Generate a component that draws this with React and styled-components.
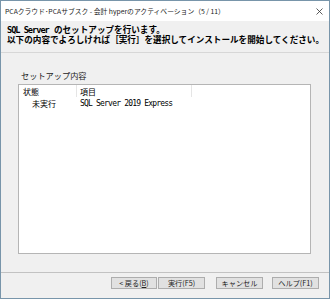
import React from 'react';
import styled, { createGlobalStyle } from 'styled-components';

const GlobalStyle = createGlobalStyle`
  html, body {
    margin: 0;
    padding: 0;
    background: #ffffff;
  }
  * {
    box-sizing: border-box;
  }
`;

const Window = styled.div`
  width: 330px;
  height: 299px;
  border: 1px solid #7895aa;
  background: #f0f0f0;
  display: flex;
  flex-direction: column;
  font-family: "Noto Sans CJK JP", "Noto Sans", sans-serif;
  color: #000;
  overflow: hidden;
`;

const TitleBar = styled.div`
  height: 20px;
  background: #fff;
  display: flex;
  align-items: center;
  justify-content: space-between;
  padding: 0 6px 0 4px;
  font-size: 6.8px;
  color: #1a1a1a;
  white-space: nowrap;
`;

const CloseIcon = styled.svg`
  width: 7px;
  height: 7px;
`;

const Header = styled.div`
  height: 32px;
  padding: 4px 0 0 6px;
  border-bottom: 1px solid #d7d7d7;
  font-family: "Liberation Mono", "Noto Sans CJK JP", monospace;
  font-weight: bold;
  font-size: 8.6px;
  line-height: 10px;
  white-space: nowrap;
`;

const Latin = styled.span`
  font-family: "DejaVu Sans Mono", monospace;
  letter-spacing: ${p => p.ls}px;
`;

const Body = styled.div`
  flex: 1;
  display: flex;
  flex-direction: column;
  padding: 17px 18px 18px 17px;
`;

const Label = styled.div`
  font-size: 8.2px;
  line-height: 10px;
  height: 10px;
  color: #222;
  padding-left: 3px;
  margin-bottom: 4px;
`;

const ListBox = styled.div`
  flex: 1;
  background: #fff;
  border: 1px solid #b5b5b5;
  display: flex;
  flex-direction: column;
`;

const Row = styled.div`
  display: flex;
  height: ${p => (p.head ? '12px' : '13px')};
  align-items: center;
  font-size: 8px;
`;

const Cell = styled.div`
  width: ${p => p.w}px;
  height: 100%;
  display: flex;
  align-items: center;
  padding-left: ${p => p.pad}px;
  border-right: ${p => (p.divider ? '1px solid #e5e5e5' : 'none')};
  font-size: 8px;
  white-space: nowrap;
`;

const Footer = styled.div`
  height: 26px;
  border-top: 1px solid #c2c2c2;
  display: flex;
  justify-content: flex-end;
  align-items: flex-start;
  padding: 4px 10px 0 0;
`;

const Button = styled.button`
  width: ${p => p.w}px;
  height: 12px;
  margin-left: ${p => p.gap}px;
  padding: 0;
  border: 1px solid #adadad;
  background: #e1e1e1;
  font-family: "Noto Sans CJK JP", sans-serif;
  font-size: 7.2px;
  line-height: 10px;
  color: #222;
  display: flex;
  align-items: center;
  justify-content: center;
  white-space: nowrap;
`;

const Key = styled.span`
  text-decoration: underline;
`;

export default function App() {
  return (
    <>
      <GlobalStyle />
      <Window>
        <TitleBar>
          <span>PCAクラウド･PCAサブスク - 会計 hyperのアクティベーション（5 / 11）</span>
          <CloseIcon viewBox="0 0 7 7">
            <path d="M0.5 0.5 L6.5 6.5 M6.5 0.5 L0.5 6.5" stroke="#333" strokeWidth="0.8" fill="none" />
          </CloseIcon>
        </TitleBar>
        <Header>
          <div><Latin ls={-1}>SQL Server</Latin> のセットアップを行います。</div>
          <div>以下の内容でよろしければ［実行］を選択してインストールを開始してください。</div>
        </Header>
        <Body>
          <Label>セットアップ内容</Label>
          <ListBox>
            <Row head>
              <Cell w={58} pad={4} divider>状態</Cell>
              <Cell w={115} pad={3} divider>項目</Cell>
            </Row>
            <Row>
              <Cell w={58} pad={13}>未実行</Cell>
              <Cell w={150} pad={3}><Latin ls={-0.8}>SQL Server 2019 Express</Latin></Cell>
            </Row>
          </ListBox>
        </Body>
        <Footer>
          <Button w={46} gap={0}>&lt; 戻る(<Key>B</Key>)</Button>
          <Button w={47} gap={1}>実行(F5)</Button>
          <Button w={47} gap={11}>キャンセル</Button>
          <Button w={47} gap={9}>ヘルプ(F1)</Button>
        </Footer>
      </Window>
    </>
  );
}
